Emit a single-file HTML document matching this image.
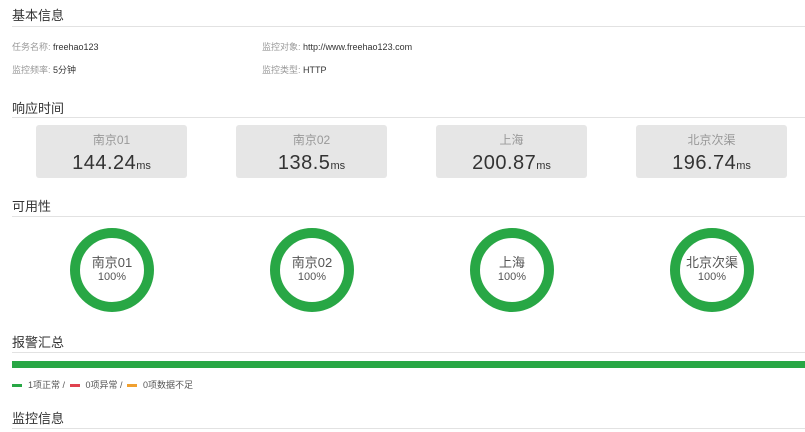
<html><head><style>
body{margin:0;width:805px;height:432px;background:#fff;font-family:"Liberation Sans","Noto Sans CJK SC",sans-serif;position:relative;overflow:hidden}
.h{position:absolute;left:12px;font-size:13px;color:#333}
.l{position:absolute;left:12px;right:0;height:1px;background:#e2e2e2}
.t{position:absolute;font-size:9px;color:#999}
.t b{font-weight:normal;color:#333}
.box{position:absolute;top:125px;width:151px;height:53px;background:#e6e6e6;border-radius:3px;text-align:center}
.box .n{font-size:12px;color:#999;margin-top:8px;line-height:14px}
.box .v{font-size:20px;color:#333;line-height:22px;margin-top:5px;letter-spacing:0.5px}
.box .v span{font-size:11px;letter-spacing:0}
.d{position:absolute;top:228px;width:64px;height:64px;border:10px solid #28a745;border-radius:50%;text-align:center;color:#555}
.d .a{font-size:13px;margin-top:17px;line-height:15px}
.d .b{font-size:11px;line-height:13px;margin-top:1px}
.lg{position:absolute;top:378px;font-size:9px;color:#555}
.lg i{display:inline-block;width:10px;height:3px;vertical-align:middle;margin:0 6px 0 0}
</style></head><body>
<div class="h" style="top:5px">基本信息</div><div class="l" style="top:26px"></div>
<div class="t" style="left:12px;top:40px">任务名称: <b>freehao123</b></div>
<div class="t" style="left:262px;top:40px">监控对象: <b>http://www.freehao123.com</b></div>
<div class="t" style="left:12px;top:63px">监控频率: <b>5分钟</b></div>
<div class="t" style="left:262px;top:63px">监控类型: <b>HTTP</b></div>
<div class="h" style="top:98px">响应时间</div><div class="l" style="top:117px"></div>
<div class="box" style="left:36px"><div class="n">南京01</div><div class="v">144.24<span>ms</span></div></div>
<div class="box" style="left:236px"><div class="n">南京02</div><div class="v">138.5<span>ms</span></div></div>
<div class="box" style="left:436px"><div class="n">上海</div><div class="v">200.87<span>ms</span></div></div>
<div class="box" style="left:636px"><div class="n">北京次渠</div><div class="v">196.74<span>ms</span></div></div>
<div class="h" style="top:196px">可用性</div><div class="l" style="top:216px"></div>
<div class="d" style="left:70px"><div class="a">南京01</div><div class="b">100%</div></div>
<div class="d" style="left:270px"><div class="a">南京02</div><div class="b">100%</div></div>
<div class="d" style="left:470px"><div class="a">上海</div><div class="b">100%</div></div>
<div class="d" style="left:670px"><div class="a">北京次渠</div><div class="b">100%</div></div>
<div class="h" style="top:332px">报警汇总</div><div class="l" style="top:352px"></div>
<div style="position:absolute;left:12px;right:0;top:361px;height:7px;background:#28a745"></div>
<div class="lg" style="left:12px"><i style="background:#28a745"></i>1项正常 / <i style="background:#e0424f;margin-left:2px"></i>0项异常 / <i style="background:#f0a030;margin-left:2px"></i>0项数据不足</div>
<div class="h" style="top:408px">监控信息</div><div class="l" style="top:428px"></div>
</body></html>
